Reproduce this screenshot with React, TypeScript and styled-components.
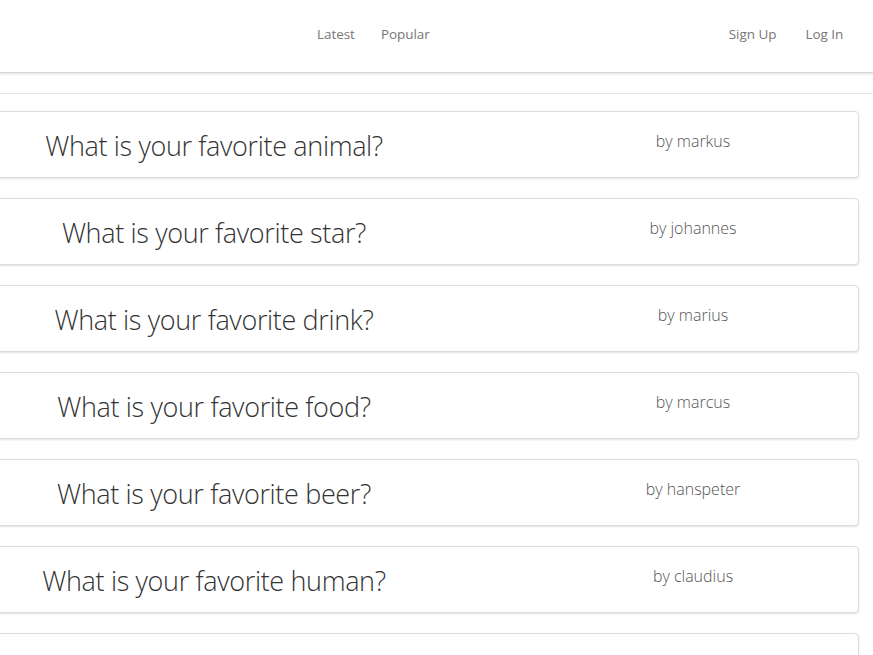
import React from "react";
import styled, { createGlobalStyle } from "styled-components";

const Global = createGlobalStyle`
  html, body { margin: 0; padding: 0; background: #fff; overflow: hidden; }
  body { font-family: "Open Sans", "Liberation Sans", sans-serif; }
`;

const Header = styled.header`
  height: 72px;
  display: flex;
  align-items: center;
  background: #fff;
  border-bottom: 1px solid #d6d6d6;
  box-shadow: 0 1px 3px rgba(0, 0, 0, 0.12);
  position: relative;
`;

const NavGroup = styled.nav<{ $left: number; $gap: number }>`
  display: flex;
  gap: ${(p) => p.$gap}px;
  margin-left: ${(p) => p.$left}px;
  padding-bottom: 4px;
`;

const NavLink = styled.a`
  font-family: "Open Sans", sans-serif;
  font-size: 13.5px;
  color: #777;
  text-decoration: none;
  letter-spacing: -0.05px;
`;

const Rule = styled.hr`
  border: none;
  border-top: 1px solid #e6e6e6;
  margin: 20px 0 0 0;
`;

const List = styled.main`
  display: flex;
  flex-direction: column;
  gap: 20px;
  padding-top: 17px;
  margin-left: -106px;
  width: 965px;
`;

const Card = styled.article`
  height: 65px;
  border: 1px solid #dcdcdc;
  border-radius: 4px;
  box-shadow: 0 1px 2px rgba(0, 0, 0, 0.12);
  background: #fff;
  display: grid;
  grid-template-columns: 638px 320px;
  box-sizing: content-box;
`;

const Title = styled.h2`
  margin: 0;
  font-family: "Open Sans", sans-serif;
  font-weight: 300;
  font-size: 27px;
  letter-spacing: -0.35px;
  color: #333;
  text-align: center;
  align-self: center;
  padding-top: 2px;
`;

const Author = styled.p`
  margin: 0;
  font-family: "Open Sans", sans-serif;
  font-weight: 300;
  font-size: 16px;
  color: #555;
  text-align: center;
  padding-top: 18px;
`;

const questions = [
  { q: "What is your favorite animal?", by: "markus" },
  { q: "What is your favorite star?", by: "johannes" },
  { q: "What is your favorite drink?", by: "marius" },
  { q: "What is your favorite food?", by: "marcus" },
  { q: "What is your favorite beer?", by: "hanspeter" },
  { q: "What is your favorite human?", by: "claudius" },
  { q: "", by: "" },
];

export default function App() {
  return (
    <>
      <Global />
      <Header>
        <NavGroup $left={317} $gap={26}>
          <NavLink href="#">Latest</NavLink>
          <NavLink href="#">Popular</NavLink>
        </NavGroup>
        <NavGroup $left={299} $gap={29}>
          <NavLink href="#">Sign Up</NavLink>
          <NavLink href="#">Log In</NavLink>
        </NavGroup>
      </Header>
      <Rule />
      <List>
        {questions.map((item, i) => (
          <Card key={i}>
            <Title>{item.q}</Title>
            <Author>{item.by ? `by ${item.by}` : ""}</Author>
          </Card>
        ))}
      </List>
    </>
  );
}
